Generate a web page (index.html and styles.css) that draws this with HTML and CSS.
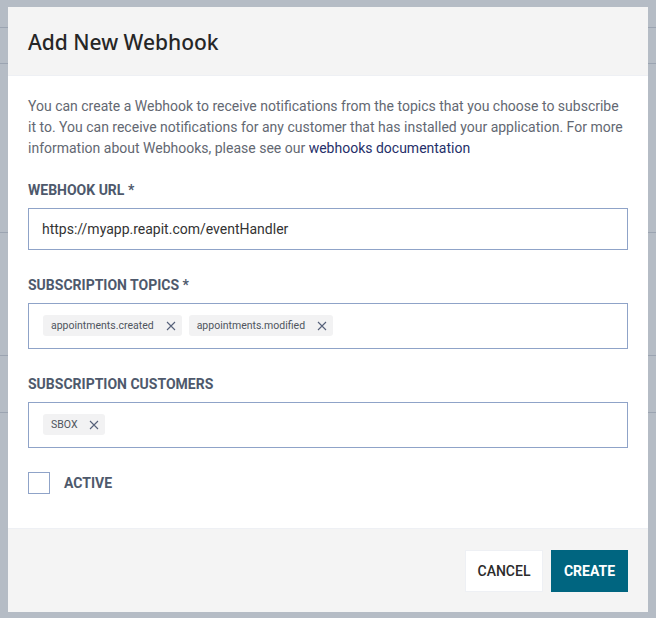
FILE: index.html
```html
<!DOCTYPE html>
<html lang="en">
<head>
<meta charset="utf-8">
<title>Add New Webhook</title>
<link rel="stylesheet" href="styles.css">
</head>
<body>
<div class="backdrop">
  <div class="bg-row r1"></div>
  <div class="bg-row r2"></div>
  <div class="bg-row r3"></div>
  <div class="bg-row r4"></div>
  <div class="bg-row r5"></div>
</div>
<div class="modal">
  <div class="modal-header">
    <h2 class="modal-title">Add New Webhook</h2>
  </div>
  <div class="modal-body">
    <p class="intro">You can create a Webhook to receive notifications from the topics that you choose to subscribe it to. You can receive notifications for any customer that has installed your application. For more information about Webhooks, please see our <a class="link" href="#">webhooks documentation</a></p>
    <div class="field">
      <label class="label">Webhook URL *</label>
      <div class="input">https://myapp.reapit.com/eventHandler</div>
    </div>
    <div class="field">
      <label class="label">Subscription Topics *</label>
      <div class="multi">
        <span class="chip">appointments.created<svg class="chip-x" viewBox="0 0 10 10"><path d="M1 1L9 9M9 1L1 9"/></svg></span>
        <span class="chip">appointments.modified<svg class="chip-x" viewBox="0 0 10 10"><path d="M1 1L9 9M9 1L1 9"/></svg></span>
      </div>
    </div>
    <div class="field">
      <label class="label">Subscription Customers</label>
      <div class="multi">
        <span class="chip">SBOX<svg class="chip-x" viewBox="0 0 10 10"><path d="M1 1L9 9M9 1L1 9"/></svg></span>
      </div>
    </div>
    <div class="check-row">
      <span class="checkbox"></span>
      <span class="label check-label">Active</span>
    </div>
  </div>
  <div class="modal-footer">
    <button class="btn btn-cancel">Cancel</button>
    <button class="btn btn-create">Create</button>
  </div>
</div>
</body>
</html>
```
FILE: styles.css
```css
* { box-sizing: border-box; }
html, body {
  margin: 0;
  padding: 0;
  width: 656px;
  height: 618px;
  overflow: hidden;
}
body {
  background: #b5bcc5;
  font-family: Roboto, "Liberation Sans", sans-serif;
  position: relative;
}
.backdrop {
  position: absolute;
  inset: 0;
}
.bg-row {
  position: absolute;
  left: 0;
  right: 0;
  height: 1px;
  background: #9ba4b1;
}
.r1 { top: 27px; }
.r2 { top: 63px; }
.r3 { top: 232px; }
.r4 { top: 355px; }
.r5 { top: 412px; }

.modal {
  position: absolute;
  left: 8px;
  top: 7px;
  width: 640px;
  height: 605px;
  background: #ffffff;
  display: flex;
  flex-direction: column;
}
.modal-header {
  height: 69px;
  background: #f4f4f4;
  border-bottom: 1px solid #eef0f4;
  padding: 0 20px;
  display: flex;
  align-items: center;
}
.modal-title {
  margin: 0;
  font-family: "Noto Sans", "Open Sans", sans-serif;
  font-weight: 500;
  font-size: 21px;
  color: #262626;
  padding-top: 1px;
}
.modal-body {
  flex: 1;
  padding: 20px 20px 0 20px;
}
.intro {
  margin: 0 0 21px 0;
  font-size: 14px;
  line-height: 21px;
  color: #636872;
}
.link {
  color: #262f69;
  text-decoration: none;
}
.field {
  display: flex;
  flex-direction: column;
  gap: 8px;
  margin-bottom: 25px;
}
.label {
  font-size: 14px;
  line-height: 20px;
  font-weight: 700;
  text-transform: uppercase;
  color: #4e596c;
}
.input {
  height: 42px;
  border: 1px solid #8fa3c8;
  padding: 0 13px;
  display: flex;
  align-items: center;
  font-size: 14px;
  color: #333333;
}
.multi {
  height: 46px;
  border: 1px solid #8fa3c8;
  padding: 11px 14px 0 14px;
  display: flex;
  align-items: flex-start;
  gap: 7px;
}
.chip {
  height: 21px;
  background: #f2f2f3;
  border-radius: 3px;
  padding: 0 6px 0 8px;
  display: inline-flex;
  align-items: center;
  font-size: 10.5px;
  color: #4f555e;
}
.chip-x {
  width: 10px;
  height: 10px;
  margin-left: 12px;
  fill: none;
  stroke: #56617a;
  stroke-width: 1.1;
}
.check-row {
  display: flex;
  align-items: center;
  margin-top: -1px;
}
.checkbox {
  width: 22px;
  height: 22px;
  border: 1px solid #8fa3c8;
  background: #ffffff;
}
.check-label {
  margin-left: 14px;
}
.modal-footer {
  height: 84px;
  background: #f4f4f4;
  border-top: 1px solid #eef0f4;
  display: flex;
  justify-content: flex-end;
  align-items: center;
  gap: 8px;
  padding: 0 20px;
}
.btn {
  height: 42px;
  border: 1px solid transparent;
  font-family: Roboto, "Liberation Sans", sans-serif;
  font-size: 14px;
  text-transform: uppercase;
  cursor: pointer;
}
.btn-cancel {
  width: 78px;
  background: #ffffff;
  border-color: #eef0f4;
  color: #2b2b2b;
  font-weight: 500;
}
.btn-create {
  width: 77px;
  background: #006580;
  color: #ffffff;
  font-weight: 700;
}
```
